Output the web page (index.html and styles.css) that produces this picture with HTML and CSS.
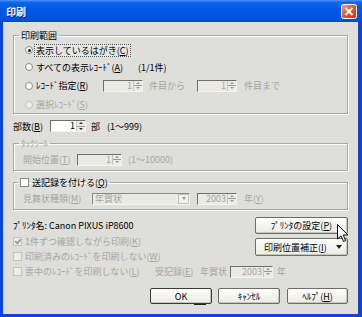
FILE: index.html
```html
<!DOCTYPE html>
<html lang="ja">
<head>
  <meta charset="UTF-8">
  <title>印刷</title>
  <link rel="stylesheet" href="styles.css">
</head>
<body>
  <div class="window">
    <div class="titlebar">
      <span class="title">印刷</span>
      <span class="close-btn">
        <svg width="16" height="15" viewBox="0 0 16 15">
          <defs>
            <linearGradient id="cg" x1="0" y1="0" x2="1" y2="1">
              <stop offset="0" stop-color="#f0a080"/>
              <stop offset="0.5" stop-color="#e05a30"/>
              <stop offset="1" stop-color="#c03010"/>
            </linearGradient>
          </defs>
          <rect x="0.5" y="0.5" width="15" height="14" rx="2" fill="url(#cg)" stroke="#fff"/>
          <path d="M4.5 4 L11.5 11 M11.5 4 L4.5 11" stroke="#fff" stroke-width="1.8"/>
        </svg>
      </span>
    </div>

    <div class="client">
      <!-- 印刷範囲 -->
      <fieldset class="group range">
        <legend>印刷範囲</legend>
        <div class="row r1">
          <span class="radio checked"></span>
          <span class="label focus">表示しているはがき(<u>C</u>)</span>
        </div>
        <div class="row r2">
          <span class="radio"></span>
          <span class="label w-all">すべての表示ﾚｺｰﾄﾞ(<u>A</u>)</span>
          <span>(1/1件)</span>
        </div>
        <div class="row r3">
          <span class="radio"></span>
          <span class="label w-rec">ﾚｺｰﾄﾞ指定(<u>R</u>)</span>
          <span class="spin disabled w40"><span class="val">1</span><span class="arrows"><i class="up"></i><i class="down"></i></span></span>
          <span class="dim w-from">件目から</span>
          <span class="spin disabled w40"><span class="val">1</span><span class="arrows"><i class="up"></i><i class="down"></i></span></span>
          <span class="dim gap7">件目まで</span>
        </div>
        <div class="row r4">
          <span class="radio disabled"></span>
          <span class="label dim">選択ﾚｺｰﾄﾞ(<u>S</u>)</span>
        </div>
      </fieldset>

      <!-- 部数 -->
      <div class="row copies">
        <span class="w-copies">部数(<u>B</u>)</span>
        <span class="spin w36"><span class="val">1</span><span class="arrows"><i class="up"></i><i class="down"></i></span></span>
        <span class="w-bu">部</span>
        <span>(1〜999)</span>
      </div>

      <!-- ﾀｯｸｼｰﾙ -->
      <fieldset class="group tack">
        <legend class="dim">ﾀｯｸｼｰﾙ</legend>
        <div class="row inner">
          <span class="dim w-start">開始位置(<u>T</u>)</span>
          <span class="spin disabled w45"><span class="val">1</span><span class="arrows"><i class="up"></i><i class="down"></i></span></span>
          <span class="dim gap6">(1〜10000)</span>
        </div>
      </fieldset>

      <!-- 送記録 -->
      <fieldset class="group sent">
        <legend><span class="check"></span>送記録を付ける(<u>Q</u>)</legend>
        <div class="row inner">
          <span class="dim w-kind">見舞状種類(<u>M</u>)</span>
          <span class="combo"><span class="combo-text">年賀状</span><span class="combo-btn"><i class="down"></i></span></span>
          <span class="spin disabled w40 gap7"><span class="val">2003</span><span class="arrows"><i class="up"></i><i class="down"></i></span></span>
          <span class="dim gap7">年(<u>Y</u>)</span>
        </div>
      </fieldset>

      <!-- プリンタ -->
      <div class="row printer">
        <span>ﾌﾟﾘﾝﾀ名: Canon PIXUS iP8600</span>
        <span class="btn w-btn">ﾌﾟﾘﾝﾀの設定(<u>P</u>)
          <svg class="cursor" width="12" height="19" viewBox="0 0 12 19">
            <path d="M0.5 0.5 L0.5 15 L4 11.8 L6.5 17.5 L8.6 16.6 L6.2 11 L10.8 11 Z" fill="#fff" stroke="#000" stroke-width="1"/>
          </svg>
        </span>
      </div>

      <!-- options -->
      <div class="options">
        <div class="opt o1 dim"><span class="check checked disabled"></span>1件ずつ確認しながら印刷(<u>K</u>)</div>
        <span class="btn adjust">印刷位置補正(<u>I</u>)<i class="down big"></i></span>
        <div class="opt o2 dim"><span class="check disabled"></span>印刷済みのﾚｺｰﾄﾞを印刷しない(<u>W</u>)</div>
        <div class="opt o3 dim">
          <span class="check disabled"></span>
          <span class="w-mourn">喪中のﾚｺｰﾄﾞを印刷しない(<u>L</u>)</span>
          <span class="w-recv">受記録(<u>E</u>)</span>
          <span class="w-nenga">年賀状</span>
          <span class="spin disabled w43"><span class="val">2003</span><span class="arrows"><i class="up"></i><i class="down"></i></span></span>
          <span class="gap4">年</span>
        </div>
      </div>

      <!-- buttons -->
      <div class="actions">
        <span class="btn default w62">OK<i class="caret"></i></span>
        <span class="btn w62">ｷｬﾝｾﾙ</span>
        <span class="btn w61 last">ﾍﾙﾌﾟ(<u>H</u>)</span>
      </div>
    </div>
  </div>
</body>
</html>
```

FILE: styles.css
```css
* {
  box-sizing: border-box;
}

body {
  margin: 0;
  font-family: "Noto Sans CJK JP", sans-serif;
  font-size: 9px;
  line-height: 11px;
  color: #000;
  background: #fff;
}

u {
  text-decoration: underline;
  text-underline-offset: 1px;
}

.window {
  width: 362px;
  height: 317px;
  display: flex;
  flex-direction: column;
  background: #0b44d6;
}

/* Title bar */
.titlebar {
  height: 22px;
  display: flex;
  align-items: center;
  justify-content: space-between;
  padding: 0 5px 0 6px;
  background: linear-gradient(#4a90f8 0%, #0c62e8 12%, #0058e6 45%, #0055e0 80%, #0a47c8 100%);
}

.title {
  color: #fff;
  font-weight: bold;
  font-size: 10px;
  text-shadow: 1px 1px 0 #0a2a90;
}

.close-btn {
  display: flex;
}

/* Client area */
.client {
  flex: 1;
  margin: 0 4px 3px 3px;
  padding: 8px 10px 0 10px;
  background: #dededb;
}

.row {
  display: flex;
  align-items: center;
  white-space: nowrap;
}

.dim {
  color: #a6a6a0;
}

/* Group boxes */
.group {
  margin: 0;
  padding: 0;
  min-width: 0;
  border: 1px solid #a9a9a3;
  box-shadow: inset 1px 1px 0 #fff, 1px 1px 0 #fff;
}

.group legend {
  margin-left: 5px;
  padding: 0 2px;
  height: 11px;
}

.range .row {
  padding-left: 11px;
}

.r1 { height: 18px; }
.r2 { height: 16px; }
.r3 { height: 21px; }
.r4 { height: 17px; }

.radio {
  width: 8px;
  height: 8px;
  margin-right: 1px;
  border-radius: 50%;
  border: 1px solid #8a8a86;
  background: #fff;
  display: flex;
  align-items: center;
  justify-content: center;
}

.radio.checked::after {
  content: "";
  width: 3px;
  height: 3px;
  border-radius: 50%;
  background: #1a1a1a;
}

.radio.disabled {
  border-color: #c4c4c0;
  background: #ecece8;
}

.label {
  border: 1px dotted transparent;
  padding: 0 1px;
  line-height: 11px;
}

.label.focus {
  border-color: #555;
  background: #e6e6e6;
}

.w-all { width: 104px; }
.w-rec { width: 69px; }
.w-from { width: 48px; margin-left: 6px; }
.gap7 { margin-left: 7px; }
.gap6 { margin-left: 6px; }
.gap4 { margin-left: 4px; }

/* Spin boxes */
.spin {
  height: 12px;
  display: flex;
  align-items: stretch;
  background: #fff;
  border: 1px solid;
  border-color: #6e6e6e #f4f4f4 #f4f4f4 #6e6e6e;
}

.spin.disabled {
  background: #ebeae2;
  color: #a6a6a0;
}

.w36 { width: 36px; }
.w40 { width: 40px; }
.w43 { width: 43px; }
.w45 { width: 45px; }

.val {
  flex: 1;
  text-align: right;
  padding-right: 1px;
  line-height: 10px;
}

.arrows {
  width: 9px;
  display: flex;
  flex-direction: column;
  background: #ecebe4;
  border-left: 1px solid #c8c8c0;
}

.arrows i {
  flex: 1;
  display: flex;
  align-items: center;
  justify-content: center;
}

.arrows .up {
  border-bottom: 1px solid #9a9a94;
}

.up::after {
  content: "";
  border: 2px solid transparent;
  border-bottom: 2px solid #333;
  border-top: 0;
}

.down::after {
  content: "";
  border: 2px solid transparent;
  border-top: 2px solid #333;
  border-bottom: 0;
}

.disabled .up::after {
  border-bottom-color: #9a9a94;
}

.disabled .down::after {
  border-top-color: #9a9a94;
}

/* 部数 */
.copies {
  height: 24px;
}

.w-copies { width: 37px; }
.w-bu { width: 16px; margin-left: 5px; }

/* ﾀｯｸｼｰﾙ / 送記録 */
.tack .inner {
  height: 21px;
  padding-left: 9px;
}

.w-start { width: 54px; }

.sent {
  margin-top: 6px;
}

.sent legend {
  margin-left: 4px;
  display: flex;
  align-items: center;
}

.sent .inner {
  height: 21px;
  padding-left: 9px;
}

.w-kind { width: 69px; }

.check {
  width: 9px;
  height: 9px;
  margin-right: 3px;
  border: 1px solid #8a8a86;
  background: #fff;
  position: relative;
  flex: none;
}

.check.disabled {
  border-color: #c4c4c0;
  background: #ecece8;
}

.check.checked::after {
  content: "";
  position: absolute;
  left: 2px;
  top: 0;
  width: 2px;
  height: 4px;
  border: solid #a0a09a;
  border-width: 0 2px 2px 0;
  transform: rotate(40deg);
}

.combo {
  width: 98px;
  height: 12px;
  display: flex;
  border: 1px solid;
  border-color: #8a8a86 #f4f4f4 #f4f4f4 #8a8a86;
  background: #ebeae2;
  color: #a6a6a0;
}

.combo-text {
  flex: 1;
  padding-left: 2px;
  line-height: 10px;
}

.combo-btn {
  width: 11px;
  display: flex;
  align-items: center;
  justify-content: center;
  background: #f2f1ea;
  border: 1px solid #c4c4bc;
}

.combo-btn i {
  display: flex;
}

.combo-btn .down::after {
  border-width: 3px 2px 0 2px;
  border-top-color: #9a9a94;
}

/* Printer */
.printer {
  margin-top: 7px;
  height: 17px;
  justify-content: space-between;
}

.btn {
  display: flex;
  align-items: center;
  justify-content: center;
  border: 1px solid #6d6d68;
  border-radius: 2px;
  background: linear-gradient(#fdfdfb, #ecebe4);
  box-shadow: inset -1px -1px 0 #c8c6b6;
  white-space: nowrap;
}

.w-btn {
  width: 93px;
  height: 17px;
  position: relative;
}

.cursor {
  position: absolute;
  left: 81px;
  top: 6px;
}

/* Options */
.options {
  display: grid;
  grid-template-columns: 1fr 93px;
  grid-template-rows: 15px 15px 15px;
}

.opt {
  display: flex;
  align-items: center;
  white-space: nowrap;
}

.o3 {
  grid-column: 1 / -1;
}

.adjust {
  grid-column: 2;
  grid-row: 1 / 3;
  margin-top: 4px;
  height: 18px;
  justify-content: flex-start;
  padding-left: 8px;
}

.down.big {
  margin-left: auto;
  margin-right: 5px;
  display: flex;
}

.down.big::after {
  border-width: 4px 3px 0 3px;
  border-top-color: #222;
}

.w-mourn { width: 130px; }
.w-recv { width: 45px; }
.w-nenga { width: 30px; }

/* Action buttons */
.actions {
  margin-top: 9px;
  display: flex;
  justify-content: flex-end;
  gap: 6px;
}

.actions .btn {
  height: 16px;
}

.actions .last {
  margin-left: 1px;
}

.w62 { width: 62px; }
.w61 { width: 61px; }

.default {
  border-color: #3a3a36;
  position: relative;
}

.caret {
  position: absolute;
  left: 43px;
  bottom: -2px;
  width: 12px;
  height: 1px;
  background: #222;
}
```
